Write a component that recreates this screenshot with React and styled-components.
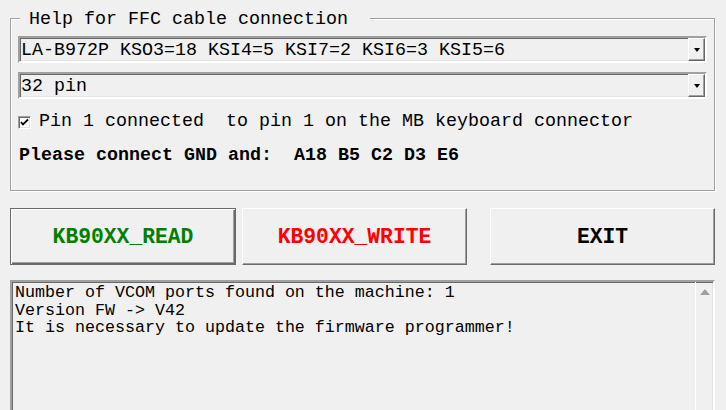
import React from "react";
import styled, { createGlobalStyle, css } from "styled-components";

const GlobalStyle = createGlobalStyle`
  html, body {
    margin: 0;
    padding: 0;
    background: #f0f0f0;
    overflow: hidden;
  }
  body {
    font-family: "Liberation Mono", "Courier New", monospace;
    color: #000;
  }
`;

const sunken = css`
  border-style: solid;
  border-width: 2px;
  border-color: #a0a0a0 #fff #fff #a0a0a0;
  box-shadow: inset 1px 1px 0 #696969, inset -1px -1px 0 #e3e3e3;
`;

const raised = css`
  border-style: solid;
  border-width: 1px;
  border-color: #fff #696969 #696969 #fff;
  box-shadow: inset -1px -1px 0 #a0a0a0;
`;

const Window = styled.div`
  width: 726px;
  height: 410px;
  box-sizing: border-box;
  padding: 7px 11px 0 10px;
  display: flex;
  flex-direction: column;
`;

const Group = styled.fieldset`
  margin: 0;
  padding: 7px 7px 0 7px;
  height: 184px;
  flex-shrink: 0;
  box-sizing: border-box;
  border: 1px solid #a0a0a0;
  box-shadow: 1px 1px 0 #fff, inset 1px 1px 0 #fff;
  display: flex;
  flex-direction: column;
`;

const Title = styled.legend`
  margin-left: 2px;
  padding: 4px 22px 0 9px;
  font-size: 18.33px;
  line-height: 18px;
  background: #f0f0f0;
`;

const Combo = styled.div`
  ${sunken};
  height: 27px;
  box-sizing: border-box;
  display: flex;
  align-items: center;
  margin-bottom: ${(p) => p.$gap || 0}px;
`;

const ComboText = styled.div`
  flex: 1;
  padding: 2px 0 0 1px;
  font-size: 18.33px;
  line-height: 21px;
  white-space: pre;
`;

const DropButton = styled.div`
  ${raised};
  width: 17px;
  height: 23px;
  box-sizing: border-box;
  display: flex;
  align-items: center;
  justify-content: center;
`;

const Arrow = styled.div`
  width: 0;
  height: 0;
  border-style: solid;
  border-color: ${(p) =>
    p.$up
      ? "transparent transparent #a0a0a0 transparent"
      : "#000 transparent transparent transparent"};
  border-width: ${(p) => (p.$up ? "0 5px 6px 5px" : "4px 3.5px 0 3.5px")};
`;

const CheckRow = styled.label`
  display: flex;
  align-items: center;
  margin-top: 13px;
  font-size: 18.33px;
  line-height: 20px;
  white-space: pre;
`;

const Box = styled.span`
  width: 13px;
  height: 13px;
  box-sizing: border-box;
  border: 1px solid;
  border-color: #a0a0a0 #fff #fff #a0a0a0;
  box-shadow: inset 1px 1px 0 #696969, inset -1px -1px 0 #e3e3e3;
  background: #fff;
  margin: 1px 8px 0 0;
  display: flex;
  align-items: center;
  justify-content: center;
`;

const Notice = styled.div`
  margin-top: 14px;
  padding-left: 1px;
  font-size: 18.33px;
  font-weight: bold;
  line-height: 20px;
  white-space: pre;
`;

const ButtonRow = styled.div`
  display: flex;
  flex-shrink: 0;
  margin-top: 17px;
  height: 57px;
`;

const Button = styled.button`
  ${raised};
  width: ${(p) => p.$w}px;
  margin-left: ${(p) => p.$ml || 0}px;
  height: 57px;
  box-sizing: border-box;
  padding: 0;
  background: #f0f0f0;
  font-family: "Liberation Mono", "Courier New", monospace;
  font-size: 21.33px;
  font-weight: bold;
  color: ${(p) => p.$color || "#000"};
  ${(p) =>
    p.$default &&
    css`
      border: 1px solid #696969;
      box-shadow: inset 1px 1px 0 #fff, inset -1px -1px 0 #696969,
        inset -2px -2px 0 #a0a0a0;
    `}
`;

const Log = styled.div`
  ${sunken};
  margin-top: 15px;
  display: flex;
  box-sizing: border-box;
  height: 140px;
  flex-shrink: 0;
`;

const LogText = styled.pre`
  flex: 1;
  margin: 0;
  padding: 2px 0 0 3px;
  font-family: "Liberation Mono", "Courier New", monospace;
  font-size: 16.67px;
  line-height: 17.5px;
`;

const ScrollBar = styled.div`
  width: 17px;
  border-left: 1px solid #fff;
  display: flex;
  flex-direction: column;
  align-items: center;
  padding-top: 7px;
`;

const CheckMark = () => (
  <svg width="9" height="9" viewBox="0 0 9 9">
    <path d="M1 4 L3 6.5 L8 1.5" fill="none" stroke="#000" strokeWidth="1.8" />
  </svg>
);

export default function App() {
  return (
    <>
      <GlobalStyle />
      <Window>
        <Group>
          <Title>Help for FFC cable connection</Title>
          <Combo $gap={9}>
            <ComboText>LA-B972P KSO3=18 KSI4=5 KSI7=2 KSI6=3 KSI5=6</ComboText>
            <DropButton>
              <Arrow />
            </DropButton>
          </Combo>
          <Combo>
            <ComboText>32 pin</ComboText>
            <DropButton>
              <Arrow />
            </DropButton>
          </Combo>
          <CheckRow>
            <Box>
              <CheckMark />
            </Box>
            {"Pin 1 connected  to pin 1 on the MB keyboard connector"}
          </CheckRow>
          <Notice>{"Please connect GND and:  A18 B5 C2 D3 E6"}</Notice>
        </Group>
        <ButtonRow>
          <Button $w={226} $default $color="#008000">
            KB90XX_READ
          </Button>
          <Button $w={225} $ml={6} $color="#ff0000">
            KB90XX_WRITE
          </Button>
          <Button $w={225} $ml={23}>
            EXIT
          </Button>
        </ButtonRow>
        <Log>
          <LogText>
            {"Number of VCOM ports found on the machine: 1\nVersion FW -> V42\nIt is necessary to update the firmware programmer!"}
          </LogText>
          <ScrollBar>
            <Arrow $up />
          </ScrollBar>
        </Log>
      </Window>
    </>
  );
}
